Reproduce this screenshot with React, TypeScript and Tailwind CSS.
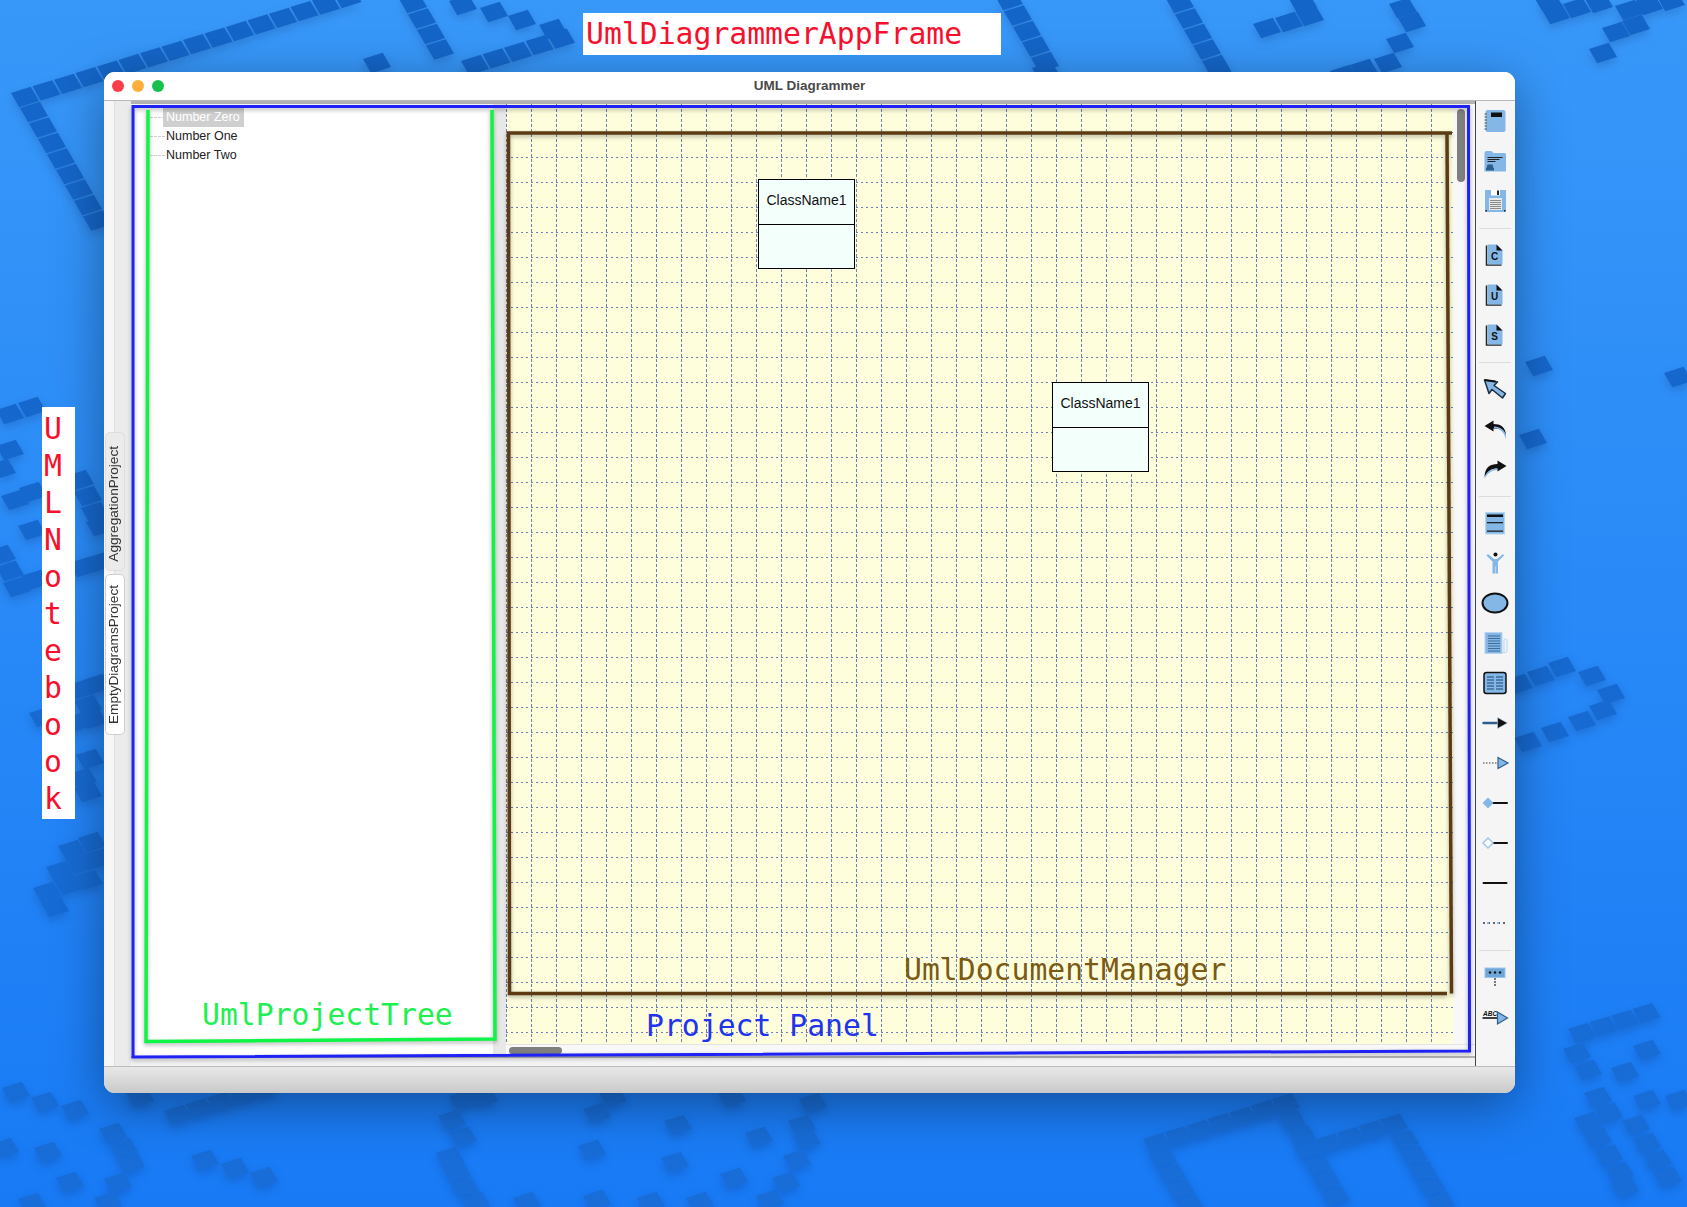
import type { ReactNode } from 'react'

// Wallpaper cells are skewed little squares, given by their centres
const U: [number, number] = [21.5, -6.6]
const V: [number, number] = [9, 15.5]

function row(x: number, y: number, n: number): number[][] {
  return Array.from({ length: n }, (_, i) => [x + U[0] * i, y + U[1] * i])
}
function col(x: number, y: number, n: number): number[][] {
  return Array.from({ length: n }, (_, i) => [x + V[0] * i, y + V[1] * i])
}

const CELLS: number[][] = [
  ...row(25, 97, 16), ...col(34, 112, 8),
  [377, 63], [463, 5], [494, 12], [522, 20], [553, 29],
  ...row(475, 65, 5), ...col(413, 3, 4),
  ...col(1009, 0, 5), [1046, 72], ...col(1180, 3, 5), [1221, 74],
  [1267, 28], [1289, 22], [1310, 16], [1303, 3], [1412, 22], [1403, 8], [1400, 43],
  [1388, 63], [1364, 69], [1344, 75],
  [1556, 14], [1577, 8], [1599, 3], [1548, 1], [1629, 10], [1649, 5], [1671, 1], [1616, 32], [1636, 25], [1603, 53],
  [1539, 366], [1533, 439], [1678, 377],
  [1519, 684], [1541, 676], [1562, 667], [1592, 676], [1611, 694],
  [1528, 742], [1555, 732], [1582, 721], [1603, 710],
  // left of the window
  [10, 414], [32, 407], [10, 450], [2, 469], [15, 500], [33, 492], [32, 530],
  [80, 480], [88, 496], [95, 512], [100, 526], [83, 567], [100, 562], [17, 587], [35, 580], [10, 571], [2, 555],
  [82, 689], [97, 684], [88, 705], [43, 717], [75, 723], [93, 719], [90, 759], [88, 792], [83, 778],
  [72, 850], [92, 842], [60, 871], [80, 864], [100, 858], [68, 885], [89, 880], [47, 892], [55, 907],
  // below the window
  [16, 1092], [45, 1102], [75, 1110], ...row(178, 1115, 5), [140, 1097],
  [113, 1133], [124, 1148], [131, 1163], [48, 1152], [5, 1148], [118, 1183], [70, 1182], [108, 1202], [32, 1203],
  [205, 1160], [235, 1168], [264, 1177],
  [463, 1100], [484, 1097], [452, 1120], [463, 1137], [450, 1157], [457, 1172], [465, 1187], [476, 1202],
  [597, 1113], [613, 1097], [732, 1097], [813, 1103], [802, 1125], [807, 1140], [797, 1160], [786, 1182],
  [678, 1125], [759, 1137], [592, 1150], [675, 1162], [734, 1178], [527, 1202], [597, 1200], [651, 1202], [700, 1202], [770, 1200],
  ...row(1157, 1143, 7), [1292, 1120], [1302, 1135], ...row(1308, 1150, 5),
  ...col(1405, 1140, 5), ...col(1318, 1165, 3), ...col(1163, 1158, 4),
  ...row(1582, 1033, 4), [1577, 1053], [1588, 1070], [1598, 1097], [1609, 1113], [1588, 1122], [1598, 1138], [1609, 1155], [1620, 1172], [1625, 1187],
  [1647, 1100], [1636, 1125], [1647, 1143], [1658, 1160], [1668, 1177], [1647, 1050], [1625, 1072], [1679, 1100],
]

function cellPoints([x, y]: number[]): string {
  const k = 0.46
  const corners = [[-1, -1], [1, -1], [1, 1], [-1, 1]]
  return corners
    .map(([a, b]) => `${x + a * k * U[0] + b * k * V[0]},${y + a * k * U[1] + b * k * V[1]}`)
    .join(' ')
}

const B = '#85b7e6'
const D = '#2c5f8f'

function DocIcon({ letter }: { letter: string }) {
  return (
    <>
      <path d="M6.500 5.500v19.500h15" fill="none" stroke="#222" strokeWidth="1.500" />
      <path d="M7.500 4.500h9l6 6v14h-15z" fill={B} />
      <path d="M16.500 4.500l6 6h-6z" fill="#111" />
      <text x="14.500" y="20" textAnchor="middle" fontSize="10" fontWeight="700" fontFamily="Liberation Sans, sans-serif" fill="#111">{letter}</text>
    </>
  )
}

const ICONS: ReactNode[] = [
  // notebook
  <g key="nb">
    <rect x="5.500" y="4" width="20" height="22" rx="2" fill={B} />
    <rect x="11" y="6.500" width="11" height="4.500" fill="#111" />
    <path d="M4.500 8h2.500M4.500 11h2.500M4.500 14h2.500M4.500 17h2.500M4.500 20h2.500M4.500 23h2.500" stroke="#555" strokeWidth="1" />
  </g>,
  // open project
  <g key="open">
    <path d="M4.500 7a2 2 0 0 1 2-2h5l2 2h11a1.500 1.500 0 0 1 1.500 1.500v17h-21.500z" fill={B} />
    <path d="M7.500 11.500h15M7.500 13.500h12M7.500 15.500h8" stroke="#222" strokeWidth="1.100" />
    <path d="M7.500 18.500h5l1 3.500h-7z" fill={D} />
    <rect x="6" y="22" width="8" height="2.500" fill={D} />
  </g>,
  // save
  <g key="save">
    <path d="M5 4h21v22h-21z" fill={B} />
    <rect x="11" y="4" width="9" height="5.500" fill="#fff" />
    <rect x="17" y="4.500" width="2" height="4.500" fill="#222" />
    <rect x="9" y="12" width="13" height="12" fill="#e8e8e8" />
    <path d="M10 14.500h11M10 16.500h11M10 18.500h11M10 20.500h11M10 22.500h11" stroke="#8a8a8a" strokeWidth="1" />
    <rect x="5.500" y="24" width="1.500" height="1.500" fill="#222" />
    <rect x="24" y="24" width="1.500" height="1.500" fill="#222" />
  </g>,
  null,
  <g key="c"><DocIcon letter="C" /></g>,
  <g key="u"><DocIcon letter="U" /></g>,
  <g key="s"><DocIcon letter="S" /></g>,
  null,
  // pointer
  <g key="ptr">
    <path d="M4.500 6l13 2-3.500 3.500 11.500 8-3 4.500-10.500-8.500-3 4z" fill={B} stroke="#1a2c3d" strokeWidth="1.500" strokeLinejoin="round" />
    <path d="M4.500 6l11 1.500" stroke="#111" strokeWidth="2" />
  </g>,
  // undo
  <g key="undo">
    <path d="M4.500 12l9-5.500v3.500c7 0 12 3 12.500 11-2.500-5-6.500-6.500-12.500-6.500v3z" fill="#111" />
    <path d="M14 12.500c6 .5 11 3 12 9v4c-2-8-6-11-12-11.500z" fill={B} />
  </g>,
  // redo
  <g key="redo">
    <path d="M26.500 12l-9-5.500v3.500C10 10 5 13 4.500 23c3-6 7-8.500 13-8.500v3z" fill="#111" />
    <path d="M4.500 25c.5-6 5-10 12.500-10.500v1.500c-6 .5-9.500 3.500-12.500 9z" fill={B} />
  </g>,
  null,
  // class
  <g key="cls">
    <rect x="5.500" y="4.500" width="19" height="21.500" fill={B} stroke="#b8d5f0" />
    <rect x="7" y="6.500" width="16" height="2.500" fill="#111" />
    <rect x="7" y="14" width="16" height="1.300" fill="#222" />
    <rect x="7" y="22.500" width="16" height="1.300" fill="#222" />
  </g>,
  // actor
  <g key="actor">
    <circle cx="15.500" cy="6.500" r="2" fill="#111" />
    <path d="M8 6l6 5h3l6-5 1 1.500-6 6v12h-2.500v-7h-.5v7h-2.500v-12l-6-6z" fill={B} />
  </g>,
  // use case
  <ellipse key="oval" cx="15" cy="15" rx="12.500" ry="9.500" fill={B} stroke="#111" strokeWidth="2" />,
  // text note
  <g key="note">
    <rect x="5" y="4.500" width="17" height="21" fill={B} stroke="#b8d5f0" />
    <path d="M8 8h12M8 10.500h12M8 13h12M8 15.500h12M8 18h12M8 20.500h12M8 23h12" stroke="#3d6d99" strokeWidth="1.100" />
    <path d="M22 24.500h3a2 2 0 0 0 2-2v-10a1.500 1.500 0 0 0-3 0v11" fill="none" stroke="#b8d5f0" strokeWidth="1" />
  </g>,
  // table
  <g key="table">
    <rect x="4" y="4.500" width="22" height="21" rx="2.500" fill={B} stroke="#111" strokeWidth="1.500" />
    <path d="M7 9h7M7 12h7M7 15h7M7 18h7M7 21h7M16 9h7M16 12h7M16 15h7M16 18h7M16 21h7" stroke="#3d6d99" strokeWidth="1.300" />
  </g>,
  // association arrow
  <g key="arrow">
    <path d="M3.500 15h15" stroke={D} strokeWidth="2.500" strokeLinecap="round" />
    <path d="M17.500 9.500l10 5.500-10 5.500z" fill="#111" stroke="#b8d5f0" strokeWidth=".6" />
  </g>,
  // dashed inheritance
  <g key="dashed">
    <path d="M3 15h15" stroke="#777" strokeWidth="1.300" strokeDasharray="1.500 1.500" />
    <path d="M18 9.500l10 5.500-10 5.500z" fill={B} stroke={D} strokeWidth="1.200" />
  </g>,
  // composition
  <g key="comp">
    <path d="M11 15h16" stroke="#111" strokeWidth="2" strokeLinecap="round" />
    <path d="M2.500 15l5.500-5.500 5.500 5.500-5.500 5.500z" fill={B} />
  </g>,
  // aggregation
  <g key="agg">
    <path d="M13 15h14" stroke="#111" strokeWidth="2" strokeLinecap="round" />
    <path d="M3 15l5-5 5 5-5 5z" fill="#fff" stroke="#9cc6ec" strokeWidth="1.500" />
  </g>,
  // plain line
  <path key="line" d="M3.500 15h23" stroke="#111" strokeWidth="2" strokeLinecap="round" />,
  // dotted line
  <g key="dotted">
    <path d="M3 15h24" stroke="#666" strokeWidth="2" strokeDasharray="2 3" />
    <path d="M7 15h2M17 15h2" stroke={B} strokeWidth="2" />
  </g>,
  null,
  // note link
  <g key="lnk">
    <rect x="5" y="6" width="20" height="9.500" fill="#6ea6d9" stroke="#9cc6ec" />
    <circle cx="10" cy="10.500" r="1.200" fill="#111" />
    <circle cx="15" cy="10.500" r="1.200" fill="#111" />
    <circle cx="20" cy="10.500" r="1.200" fill="#111" />
    <path d="M15 16v8" stroke="#777" strokeWidth="2" strokeDasharray="2 1" />
  </g>,
  // text arrow
  <g key="abc">
    <text x="3" y="14" fontSize="6.500" fontWeight="700" fontStyle="italic" fontFamily="Liberation Sans, sans-serif" fill="#111">ABC</text>
    <path d="M2.500 16h16" stroke="#111" strokeWidth="1.600" />
    <path d="M17.500 10l10 6-10 6z" fill={B} stroke={D} strokeWidth="1.200" />
  </g>,
]

function ClassBox({ className }: { className: string }) {
  return (
    <div className={`absolute w-[97px] h-[90px] bg-[#f2fffb] border border-black flex flex-col ${className}`}>
      <div className="h-[45px] shrink-0 pb-[4px] border-b border-black flex items-center justify-center text-[14px] text-[#111]">
        ClassName1
      </div>
    </div>
  )
}

function TreeRow({ label, selected }: { label: string; selected?: boolean }) {
  return (
    <div className="h-[19px] flex items-center">
      <div className="w-[15px] ml-[19px] border-t border-dashed border-[#cfcfcf]" />
      <div className={selected ? 'h-[19px] pl-[3px] pr-[3px] w-[81px] -ml-[2px] bg-[#cfcfcf] text-white leading-[19px]' : 'pl-[1px] text-[#222]'}>
        {label}
      </div>
    </div>
  )
}

export default function App() {
  return (
    <div className="relative w-[1687px] h-[1207px] overflow-hidden bg-gradient-to-b from-[#3898f9] to-[#187af5] font-['Liberation_Sans',sans-serif]">
      {/* Wallpaper */}
      <svg className="absolute inset-0 drop-shadow-[0_4px_5px_rgba(0,0,40,0.16)]" width="1687" height="1207">
        <defs>
          <linearGradient id="cellFill" gradientUnits="userSpaceOnUse" x1="0" y1="0" x2="0" y2="1207">
            <stop offset="0" stopColor="#1465c8" />
            <stop offset="1" stopColor="#186dd8" />
          </linearGradient>
        </defs>
        {CELLS.map((c, i) => (
          <polygon key={i} points={cellPoints(c)} fill="url(#cellFill)" />
        ))}
      </svg>

      {/* Window */}
      <div className="absolute left-[104px] top-[72px] w-[1411px] h-[1021px] flex flex-col rounded-[11px] overflow-hidden bg-white shadow-[0_12px_50px_rgba(0,0,0,0.38)]">
        <div className="relative h-[29px] shrink-0 bg-white border-b border-[#b8b8b8] flex items-center justify-center">
          <div className="absolute left-[8px] top-[8px] flex gap-[8px]">
            <div className="w-[12px] h-[12px] rounded-full bg-[#fc3d48]" />
            <div className="w-[12px] h-[12px] rounded-full bg-[#fdae3c]" />
            <div className="w-[12px] h-[12px] rounded-full bg-[#15c04c]" />
          </div>
          <span className="text-[13.5px] font-bold text-[#4a4a4a]">UML Diagrammer</span>
        </div>

        <div className="flex-1 flex min-h-0">
          {/* Notebook tabs */}
          <div className="w-[27px] shrink-0 flex flex-col justify-center gap-[3px] pl-[1px] bg-[linear-gradient(90deg,#f6f6f6_10px,#dedede_10px,#dedede_11px,#ebebeb_11px)] text-[13.6px] text-[#333]">
            <div className="w-[20px] h-[139px] pr-[2px] pt-[4px] rounded-[5px] bg-[#ebebeb] border border-[#dedede] flex items-center justify-center">
              <span className="[writing-mode:vertical-rl] rotate-180 whitespace-nowrap">AggregationProject</span>
            </div>
            <div className="w-[20px] h-[161px] pr-[2px] rounded-[5px] bg-white border border-[#cfcfcf] flex items-center justify-center">
              <span className="[writing-mode:vertical-rl] rotate-180 whitespace-nowrap">EmptyDiagramsProject</span>
            </div>
          </div>

          <div className="flex-1 flex flex-col min-w-0 pb-[8px] bg-[#f3f3f3]">
            <div className="flex-1 flex min-h-0 border-t-[3px] border-b-[2px] border-[#b4b4b4]">
              {/* Project tree */}
              <div className="w-[362px] shrink-0 bg-white pt-[4px] text-[12.5px]">
                <TreeRow label="Number Zero" selected />
                <TreeRow label="Number One" />
                <TreeRow label="Number Two" />
              </div>
              <div className="w-[13px] shrink-0 bg-[#e8e8e8]" />

              {/* Diagram scroll pane */}
              <div className="relative flex-1 flex flex-col min-w-0 bg-[#f8f8f8]">
                <div className="flex-1 flex min-h-0">
                  <div className="relative w-[947px] shrink-0 bg-[#fefedd] overflow-hidden">
                    <svg className="absolute inset-0" width="947" height="940">
                      <defs>
                        <pattern id="grid" width="25" height="25" patternUnits="userSpaceOnUse">
                          <path d="M0.500 0V25" stroke="#6c82b4" strokeWidth="1" strokeDasharray="3 2" />
                          <path d="M0 3.500H25" stroke="#6c82b4" strokeWidth="1" strokeDasharray="2 3" />
                        </pattern>
                      </defs>
                      <rect width="947" height="940" fill="url(#grid)" />
                    </svg>
                    <ClassBox className="left-[252px] top-[75px]" />
                    <ClassBox className="left-[546px] top-[278px]" />
                  </div>
                </div>
                <div className="h-[12px] shrink-0 border-t border-[#e4e4e4]" />
                {/* overlay scrollbars */}
                <div className="absolute left-[951px] top-[5px] w-[8px] h-[73px] rounded-full bg-[#7f7f7f]" />
                <div className="absolute left-[3px] bottom-[2px] w-[53px] h-[7px] rounded-full bg-[#7f7f7f]" />
              </div>
            </div>
          </div>

          {/* Tool bar */}
          <div className="w-[40px] shrink-0 pr-[2px] border-l border-[#444] bg-[#f5f5f5] flex flex-col items-center">
            {ICONS.map((icon, i) =>
              icon === null ? (
                <div key={i} className="h-[14px] w-full flex items-center justify-center">
                  <div className="w-[32px] border-t border-[#dcdcdc]" />
                </div>
              ) : (
                <div key={i} className="h-[40px] w-full shrink-0 flex items-center justify-center">
                  <svg width="30" height="30" viewBox="0 0 30 30">{icon}</svg>
                </div>
              ),
            )}
          </div>
        </div>

        <div className="h-[27px] shrink-0 bg-gradient-to-b from-[#e8e8e8] to-[#c9c9c9] border-t border-[#bcbcbc]" />
      </div>

      {/* Hand drawn annotations */}
      <svg className="absolute inset-0 pointer-events-none drop-shadow-[0_2px_2px_rgba(0,0,0,0.3)]" width="1687" height="1207" fill="none">
        <path d="M133 106.500H1468.500L1469.500 1051L133 1057Z" stroke="#1f22f5" strokeWidth="3" />
        <path d="M148 110L146 1041.500L495 1039L492 110" stroke="#0ef545" strokeWidth="3.500" />
        <path d="M1452 133H508.500L509.500 993.500H1447" stroke="#5c3b12" strokeWidth="3.500" />
        <path d="M1447 133L1451.500 993.500" stroke="#5c3b12" strokeWidth="3.500" />
      </svg>

      <div className="absolute inset-0 pointer-events-none font-['DejaVu_Sans_Mono',monospace] text-[29.75px] leading-[36px]">
        <div className="absolute left-[583px] top-[13px] w-[418px] h-[42px] pl-[3px] pt-[3px] bg-white text-[#f5102d]">UmlDiagrammerAppFrame</div>
        <div className="absolute left-[42px] top-[407px] w-[33px] h-[412px] pt-[3px] pl-[2px] bg-white text-[#f5102d] flex flex-col items-start">
          {'UMLNotebook'.split('').map((ch, i) => (
            <span key={i} className="h-[37px] leading-[37px]">{ch}</span>
          ))}
        </div>
        <div className="absolute left-[202px] top-[997px] text-[#1df050]">UmlProjectTree</div>
        <div className="absolute left-[904px] top-[952px] text-[#7b5a14]">UmlDocumentManager</div>
        <div className="absolute left-[646px] top-[1008px] text-[#2233ee]">Project Panel</div>
      </div>
    </div>
  )
}
